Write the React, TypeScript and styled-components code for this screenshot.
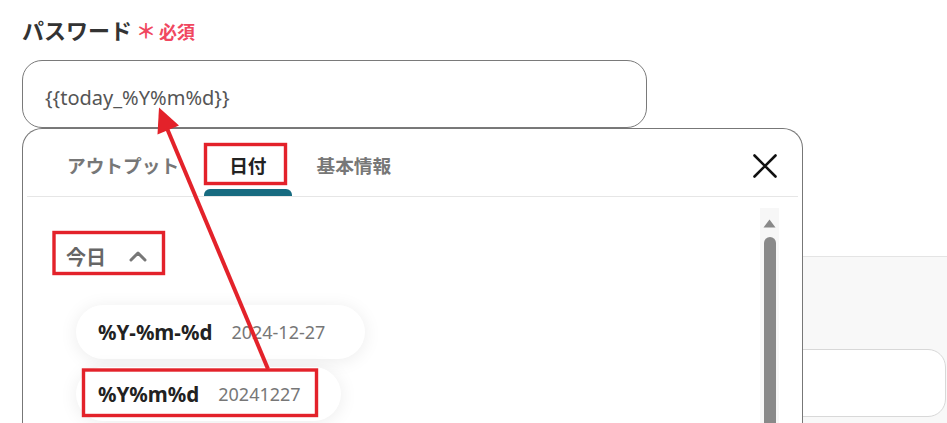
import React from 'react';
import styled, { createGlobalStyle } from 'styled-components';

const GlobalStyle = createGlobalStyle`
  html, body {
    margin: 0;
    padding: 0;
    background: #ffffff;
    overflow: hidden;
  }
  * {
    box-sizing: border-box;
  }
`;

const RED = '#e3222a';

const formats = [
  { key: '%Y-%m-%d', sample: '2024-12-27' },
  { key: '%Y%m%d', sample: '20241227' },
];

export default function App(): React.ReactElement {
  return (
    <>
      <GlobalStyle />
      <Page>
        <LabelRow>
          <Label>パスワード</Label>
          <Required>
            <Asterisk>＊</Asterisk>必須
          </Required>
        </LabelRow>

        <InputWrap>
          <Input>{'{{today_%Y%m%d}}'}</Input>

          <Popup>
            <TabBar>
              <Tab>アウトプット</Tab>
              <Tab $active>日付</Tab>
              <Tab>基本情報</Tab>
              <CloseButton aria-label="close">
                <svg width="24" height="24" viewBox="0 0 24 24">
                  <path
                    d="M1.5 1.5 L22.5 22.5 M22.5 1.5 L1.5 22.5"
                    stroke="#111"
                    strokeWidth="2.6"
                    strokeLinecap="round"
                  />
                </svg>
              </CloseButton>
            </TabBar>

            <Body>
              <Content>
                <GroupHeading>
                  <span>今日</span>
                  <svg width="18" height="12" viewBox="0 0 18 12">
                    <path
                      d="M2 10 L9 3 L16 10"
                      fill="none"
                      stroke="#777"
                      strokeWidth="3"
                      strokeLinecap="round"
                      strokeLinejoin="round"
                    />
                  </svg>
                </GroupHeading>
                <ChipList>
                  {formats.map((f) => (
                    <Chip key={f.key}>
                      <ChipKey>{f.key}</ChipKey>
                      <ChipSample>{f.sample}</ChipSample>
                    </Chip>
                  ))}
                </ChipList>
              </Content>
              <Scrollbar>
                <svg width="13" height="9" viewBox="0 0 13 9">
                  <path d="M6.5 0.5 L12.5 8.5 L0.5 8.5 Z" fill="#898989" />
                </svg>
                <Thumb />
              </Scrollbar>
            </Body>
          </Popup>
        </InputWrap>

        <BehindSection>
          <BehindInput />
        </BehindSection>

        <Annotations width="947" height="423" viewBox="0 0 947 423">
          <rect x="205.5" y="144.5" width="80" height="39" fill="none" stroke={RED} strokeWidth="3.4" />
          <rect x="54" y="232.5" width="109.5" height="41" fill="none" stroke={RED} strokeWidth="3.4" />
          <rect x="83.5" y="370" width="233" height="45.5" fill="none" stroke={RED} strokeWidth="3.4" />
          <line x1="268" y1="369" x2="166" y2="126" stroke={RED} strokeWidth="4" />
          <path d="M159 107.5 L179 125.5 L157.5 134.5 Z" fill={RED} />
        </Annotations>
      </Page>
    </>
  );
}

const Page = styled.div`
  position: relative;
  width: 947px;
  height: 423px;
  overflow: hidden;
  padding-left: 22px;
  font-family: 'Noto Sans', 'Noto Sans CJK JP', sans-serif;
`;

const LabelRow = styled.div`
  display: flex;
  align-items: baseline;
  gap: 4px;
  padding-top: 14px;
  height: 44px;
`;

const Label = styled.div`
  font-family: 'Noto Sans CJK JP', sans-serif;
  font-size: 22px;
  line-height: 30px;
  font-weight: 700;
  color: #333333;
`;

const Required = styled.div`
  display: flex;
  align-items: baseline;
  font-family: 'Noto Sans CJK JP', sans-serif;
  font-size: 18px;
  font-weight: 700;
  color: #f0475f;
`;

const Asterisk = styled.span`
  font-size: 20px;
  margin-right: 3px;
`;

const InputWrap = styled.div`
  position: relative;
  z-index: 2;
  margin-top: 16px;
  width: 625px;
`;

const Input = styled.div`
  display: flex;
  align-items: center;
  height: 68px;
  padding: 6px 22px 0;
  border: 1px solid #7a7a7a;
  border-radius: 20px;
  font-size: 20px;
  color: #555555;
  background: #ffffff;
`;

const Popup = styled.div`
  position: absolute;
  top: 100%;
  left: 0;
  width: 781px;
  height: 300px;
  display: flex;
  flex-direction: column;
  border: 1px solid #777777;
  border-bottom: none;
  border-radius: 20px 20px 0 0;
  background: #ffffff;
`;

const TabBar = styled.div`
  display: flex;
  align-items: stretch;
  height: 68px;
  margin: 0 4px;
  padding-left: 15px;
  border-bottom: 1px solid #e6e6e6;
`;

const Tab = styled.div<{ $active?: boolean }>`
  position: relative;
  display: flex;
  align-items: center;
  padding: 4px 25px 0;
  font-family: 'Noto Sans CJK JP', sans-serif;
  font-size: 18.7px;
  font-weight: 700;
  color: ${({ $active }) => ($active ? '#222222' : '#777777')};

  &::after {
    content: '';
    display: ${({ $active }) => ($active ? 'block' : 'none')};
    position: absolute;
    left: 0;
    right: 0;
    bottom: 0;
    height: 7px;
    border-radius: 6px 6px 0 0;
    background: #176b80;
  }
`;

const CloseButton = styled.button`
  margin-left: auto;
  margin-right: 21px;
  align-self: center;
  margin-top: 6px;
  padding: 0;
  border: none;
  background: none;
  display: flex;
`;

const Body = styled.div`
  flex: 1;
  display: flex;
`;

const Content = styled.div`
  flex: 1;
  padding-left: 43px;
`;

const GroupHeading = styled.div`
  display: flex;
  align-items: center;
  gap: 23px;
  margin-top: 44px;
  height: 30px;
  font-family: 'Noto Sans CJK JP', sans-serif;
  font-size: 20px;
  font-weight: 700;
  color: #666666;
`;

const ChipList = styled.div`
  display: flex;
  flex-direction: column;
  align-items: flex-start;
  gap: 8px;
  margin-top: 34px;
  padding-left: 10px;
`;

const Chip = styled.div`
  display: flex;
  align-items: center;
  gap: 19px;
  height: 54px;
  padding: 0 40px 0 22px;
  border-radius: 27px;
  background: #ffffff;
  box-shadow: 0 2px 18px rgba(0, 0, 0, 0.08);
`;

const ChipKey = styled.span`
  font-size: 20.5px;
  font-weight: 700;
  color: #222222;
`;

const ChipSample = styled.span`
  font-size: 18px;
  color: #777777;
`;

const Scrollbar = styled.div`
  display: flex;
  flex-direction: column;
  align-items: center;
  width: 19px;
  margin: 11px 23px 0 0;
  padding-top: 11px;
  background: #f7f7f7;

  svg {
    display: block;
  }
`;

const Thumb = styled.div`
  flex: 1;
  width: 12px;
  margin-top: 9px;
  border-radius: 6px 6px 0 0;
  background: #898989;
`;

const BehindSection = styled.div`
  margin-top: 128px;
  height: 200px;
  padding-top: 92px;
  border-top: 1px solid #e4e4e4;
  background: #f8f8f8;
`;

const BehindInput = styled.div`
  height: 68px;
  margin-right: 1px;
  border: 1px solid #d8d8d8;
  border-radius: 18px;
  background: #ffffff;
`;

const Annotations = styled.svg`
  position: absolute;
  top: 0;
  left: 0;
  z-index: 5;
  pointer-events: none;
`;
